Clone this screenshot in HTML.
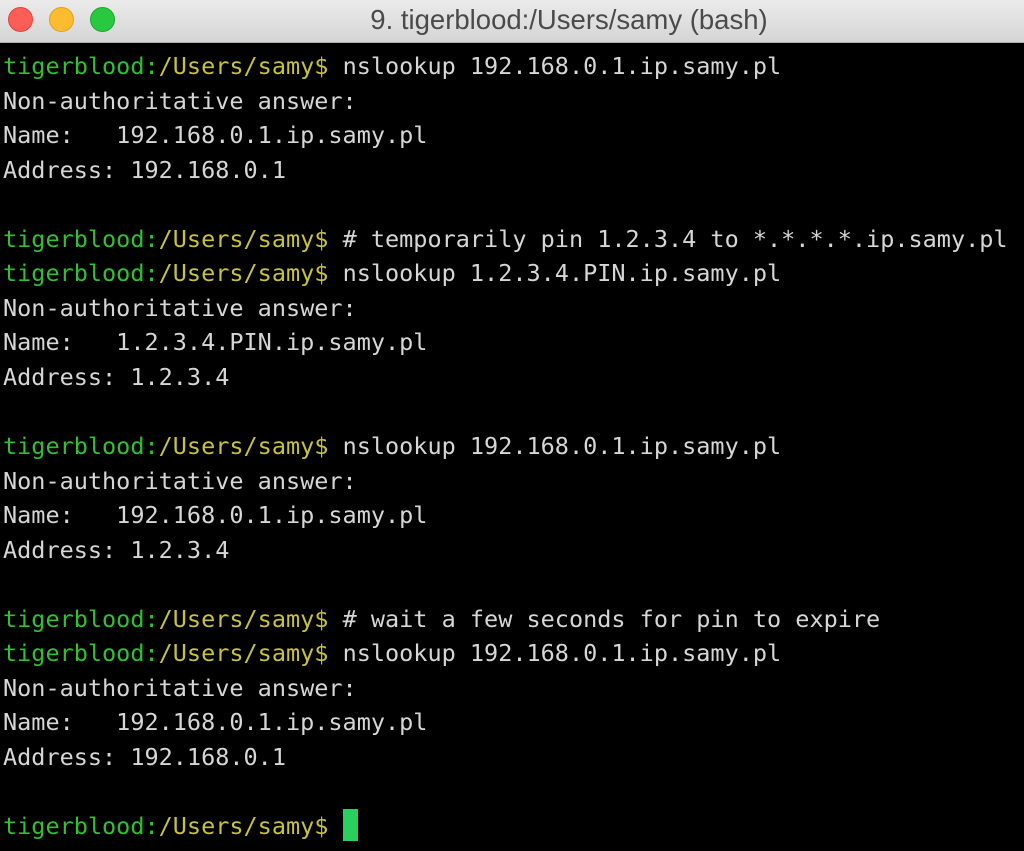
<!DOCTYPE html>
<html><head><style>
html,body{margin:0;padding:0;width:1024px;height:851px;overflow:hidden;background:#000}
.tb{position:absolute;left:0;top:0;width:1024px;height:42px;background:linear-gradient(#ebebeb,#d5d5d5);border-bottom:1px solid #b0b0b0}
.c{position:absolute;top:7px;width:25px;height:25px;border-radius:50%}
.t{position:absolute;left:0;right:0;top:4px;text-align:center;font:27.5px "Liberation Sans",sans-serif;color:#4a4a4a;padding-left:114px}
pre{position:absolute;left:3px;top:49px;margin:0;font-family:"DejaVu Sans Mono","Liberation Mono",monospace;font-size:23.5px;line-height:34.55px;color:#d6d6d6;letter-spacing:0}
.g{color:#30c030}.y{color:#c8c23a}
.cur{display:inline-block;width:15px;height:32px;background:#2ad05c;vertical-align:-7px}
</style></head><body>
<div class="tb">
<div class="c" style="left:8px;background:#fc5d57;border:1px solid #e0443e;box-sizing:border-box"></div>
<div class="c" style="left:49px;background:#fdbc2e;border:1px solid #dea123;box-sizing:border-box"></div>
<div class="c" style="left:90px;background:#28c840;border:1px solid #1aab29;box-sizing:border-box"></div>
<div class="t">9. tigerblood:/Users/samy (bash)</div>
</div>
<pre><span class="g">tigerblood:</span><span class="y">/Users/samy$</span> nslookup 192.168.0.1.ip.samy.pl
Non-authoritative answer:
Name:   192.168.0.1.ip.samy.pl
Address: 192.168.0.1

<span class="g">tigerblood:</span><span class="y">/Users/samy$</span> # temporarily pin 1.2.3.4 to *.*.*.*.ip.samy.pl
<span class="g">tigerblood:</span><span class="y">/Users/samy$</span> nslookup 1.2.3.4.PIN.ip.samy.pl
Non-authoritative answer:
Name:   1.2.3.4.PIN.ip.samy.pl
Address: 1.2.3.4

<span class="g">tigerblood:</span><span class="y">/Users/samy$</span> nslookup 192.168.0.1.ip.samy.pl
Non-authoritative answer:
Name:   192.168.0.1.ip.samy.pl
Address: 1.2.3.4

<span class="g">tigerblood:</span><span class="y">/Users/samy$</span> # wait a few seconds for pin to expire
<span class="g">tigerblood:</span><span class="y">/Users/samy$</span> nslookup 192.168.0.1.ip.samy.pl
Non-authoritative answer:
Name:   192.168.0.1.ip.samy.pl
Address: 192.168.0.1

<span class="g">tigerblood:</span><span class="y">/Users/samy$</span> <span class="cur"></span></pre>
</body></html>
